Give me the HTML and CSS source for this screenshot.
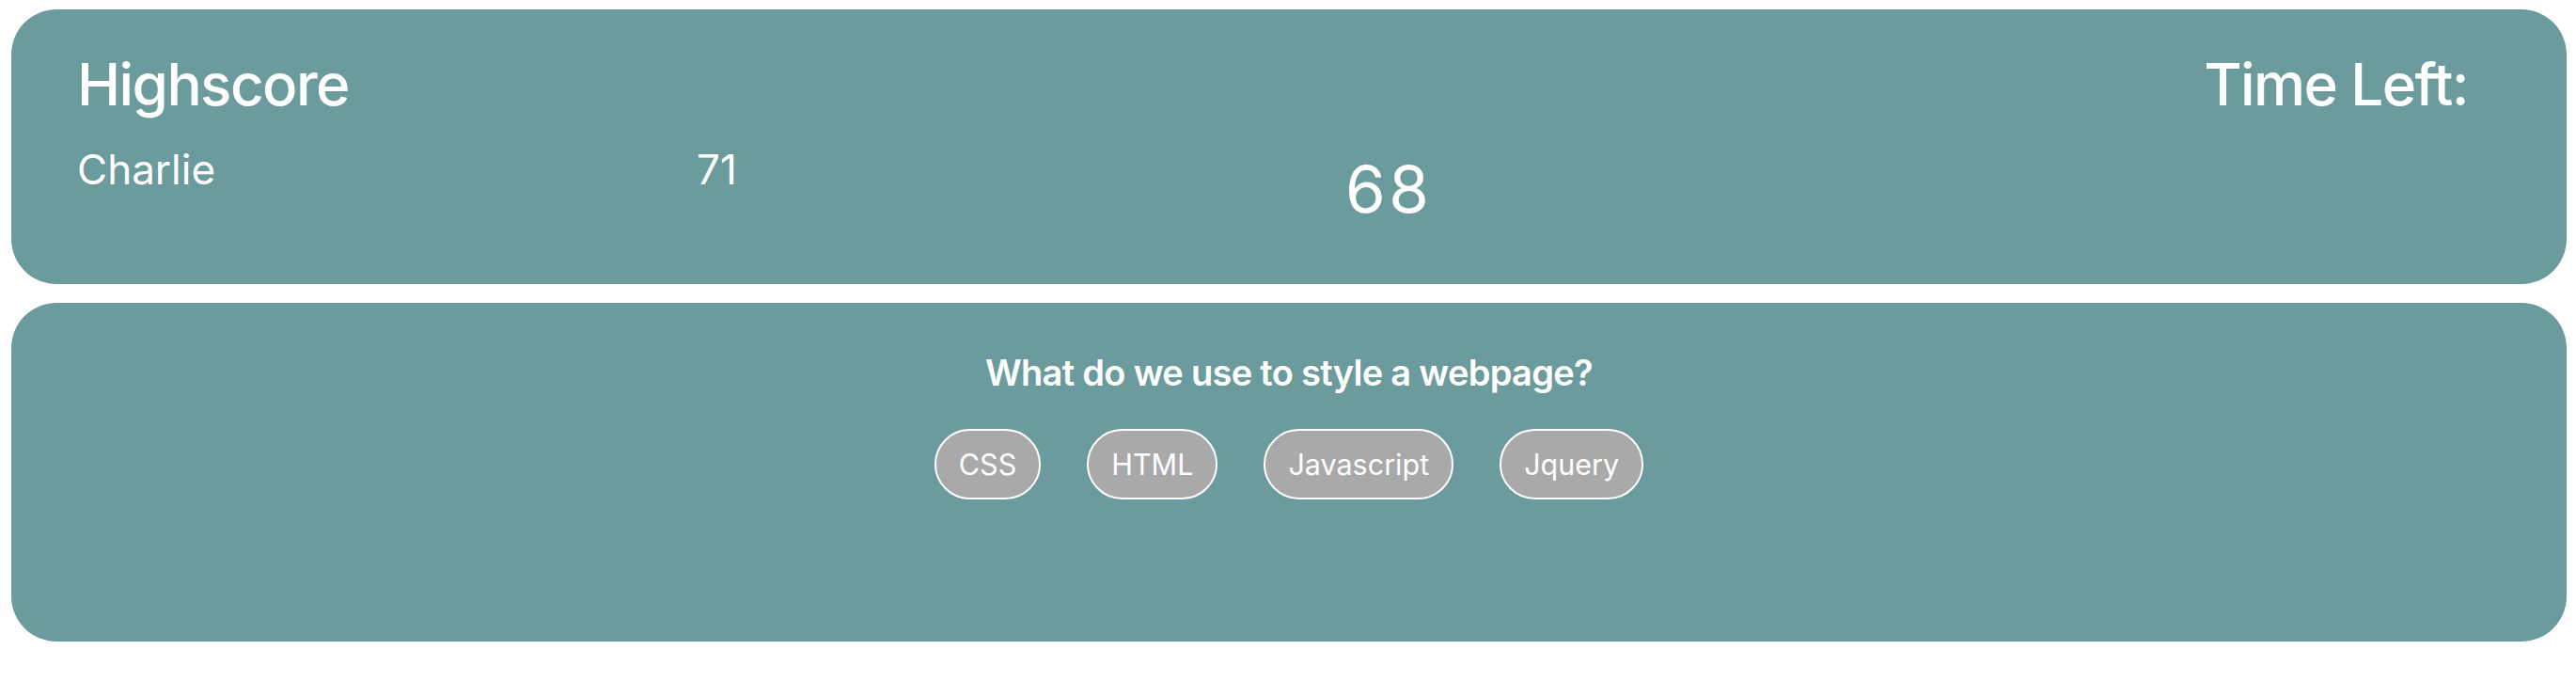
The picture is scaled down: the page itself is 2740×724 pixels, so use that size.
FILE: index.html
```html
<!DOCTYPE html>
<html lang="en">
<head>
<meta charset="utf-8">
<title>Quiz</title>
<link rel="stylesheet" href="styles.css">
</head>
<body>
  <header class="panel scoreboard">
    <div class="hs">
      <h1 class="title">Highscore</h1>
      <div class="hs-row">
        <span class="hs-name">Charlie</span>
        <span class="hs-score">71</span>
      </div>
    </div>
    <div class="timer">68</div>
    <h1 class="title time-label">Time Left:</h1>
  </header>
  <main class="panel quiz">
    <h2 class="question">What do we use to style a webpage?</h2>
    <div class="answers">
      <button class="answer">CSS</button>
      <button class="answer">HTML</button>
      <button class="answer">Javascript</button>
      <button class="answer">Jquery</button>
    </div>
  </main>
</body>
</html>
```
FILE: styles.css
```css
html, body {
  margin: 0;
  background: #ffffff;
}
body {
  padding: 10px 10px 0 12px;
  font-family: Inter, "Noto Sans", "Liberation Sans", sans-serif;
  color: #ffffff;
}
.panel {
  background: #6b9b9c;
  border-radius: 48px;
  box-sizing: border-box;
}
.scoreboard {
  height: 292px;
  display: flex;
  align-items: flex-start;
  padding: 49px 105px 0 70px;
}
.hs {
  width: 1349px;
}
.title {
  margin: 0;
  font-size: 62px;
  line-height: 62px;
  font-weight: 500;
  letter-spacing: -1.6px;
}
.hs-row {
  display: flex;
  margin-top: 37px;
  font-size: 44px;
  line-height: 44px;
}
.hs-name {
  width: 659px;
}
.timer {
  margin-top: 108px;
  font-size: 69px;
  line-height: 69px;
  letter-spacing: 3.5px;
}
.time-label {
  margin-left: auto;
}
.quiz {
  margin-top: 20px;
  height: 360px;
  padding-top: 51px;
  display: flex;
  flex-direction: column;
  align-items: center;
}
.question {
  margin: 0;
  font-size: 38px;
  line-height: 46px;
  font-weight: 600;
  letter-spacing: -0.7px;
}
.answers {
  display: flex;
  gap: 49px;
  margin-top: 37px;
}
.answer {
  font-family: Inter, "Noto Sans", "Liberation Sans", sans-serif;
  font-size: 30.5px;
  line-height: 37px;
  color: #ffffff;
  background: #a9a9a9;
  border: 2px solid #ffffff;
  border-radius: 40px;
  padding: 17px 24px;
  margin: 0;
}
```
